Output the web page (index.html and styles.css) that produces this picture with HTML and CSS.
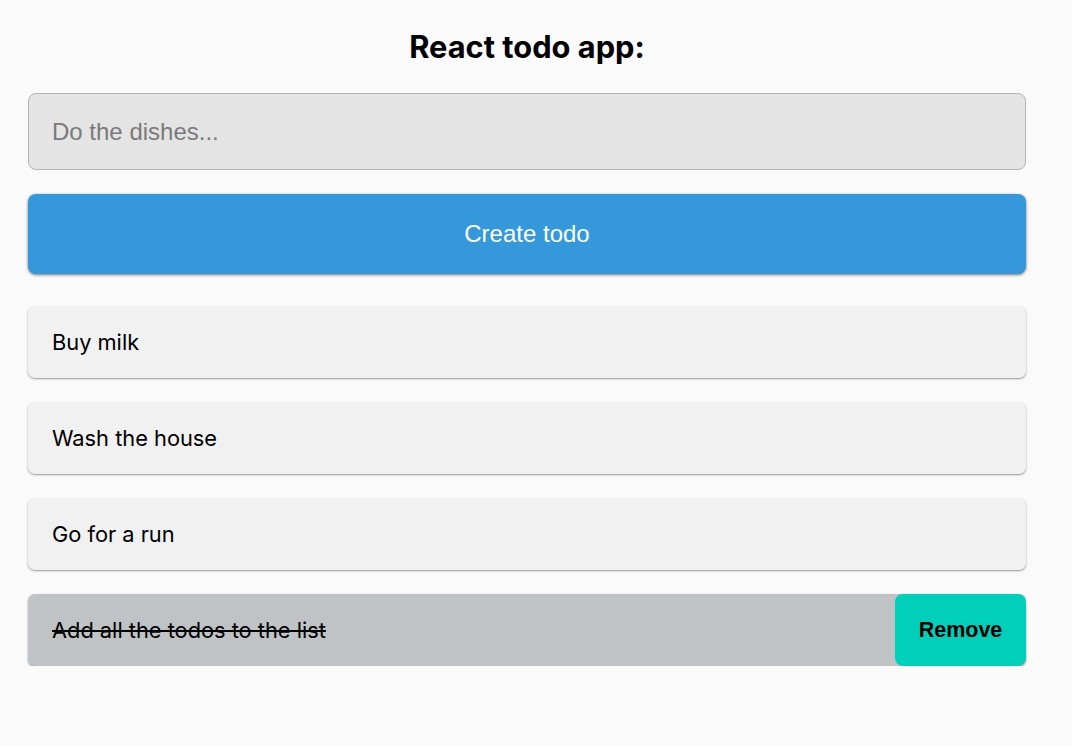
FILE: index.html
```html
<!DOCTYPE html>
<html>
<head>
<meta charset="utf-8">
<link rel="stylesheet" href="styles.css">
</head>
<body>
<div class="app">
  <h1 class="title">React todo app:</h1>
  <input class="new-todo" type="text" placeholder="Do the dishes...">
  <button class="create">Create todo</button>
  <ul class="list">
    <li class="todo"><span class="label">Buy milk</span></li>
    <li class="todo"><span class="label">Wash the house</span></li>
    <li class="todo"><span class="label">Go for a run</span></li>
    <li class="todo done"><span class="label">Add all the todos to the list</span><button class="remove">Remove</button></li>
  </ul>
</div>
</body>
</html>
```
FILE: styles.css
```css
html, body {
  margin: 0;
  padding: 0;
  background: #fafafa;
}
.app {
  width: 998px;
  margin: 0 0 0 28px;
  display: flex;
  flex-direction: column;
}
.title {
  margin: 29px 0 0;
  height: 64px;
  text-align: center;
  font-family: Inter, sans-serif;
  font-weight: 700;
  font-size: 30.8px;
  line-height: 36px;
  color: #000;
}
.new-todo {
  box-sizing: border-box;
  height: 77px;
  width: 100%;
  margin: 0;
  padding: 0 23px;
  border: 1px solid #b3b3b3;
  border-radius: 8px;
  background: #e4e4e4;
  font-family: "Liberation Sans", Arial, sans-serif;
  font-size: 24px;
  color: #333;
  outline: none;
}
.new-todo::placeholder {
  color: #7a7a7a;
}
.create {
  margin: 24px 0 0;
  height: 80px;
  width: 100%;
  border: none;
  border-radius: 8px;
  background: #3498db;
  color: #fff;
  font-family: "Liberation Sans", Arial, sans-serif;
  font-size: 24px;
  box-shadow: 0 1px 3px rgba(0,0,0,0.55);
}
.list {
  list-style: none;
  margin: 32px 0 0;
  padding: 0;
  display: flex;
  flex-direction: column;
  gap: 24px;
}
.todo {
  box-sizing: border-box;
  height: 72px;
  display: flex;
  align-items: center;
  justify-content: space-between;
  padding-left: 24px;
  background: #f1f1f1;
  border-radius: 7px;
  box-shadow: 0 1px 2px rgba(0,0,0,0.4);
  font-family: Inter, sans-serif;
  font-size: 21.8px;
  color: #000;
}
.todo.done {
  background: #bfc3c6;
}
.todo.done .label {
  text-decoration: line-through;
}
.remove {
  align-self: stretch;
  width: 131px;
  border: none;
  border-radius: 8px;
  background: #00cfb9;
  color: #000;
  font-family: "Liberation Sans", Arial, sans-serif;
  font-weight: 700;
  font-size: 21.5px;
  padding: 0;
}
```
